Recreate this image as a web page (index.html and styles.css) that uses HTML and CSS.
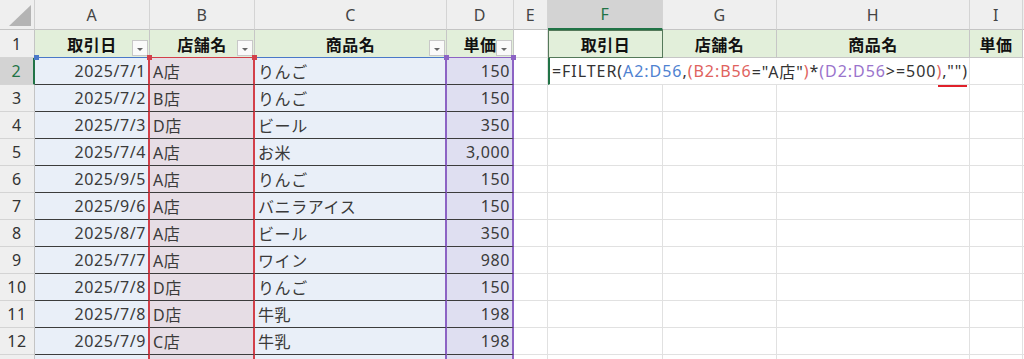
FILE: index.html
```html
<!DOCTYPE html>
<html lang="ja">
<head>
<meta charset="utf-8">
<title>FILTER</title>
<link rel="stylesheet" href="styles.css">
</head>
<body>
<div class="sheet">
  <!-- column headers -->
  <div class="c corner"><svg class="tri" width="22" height="22" viewBox="0 0 22 22"><polygon points="22,0 22,21 0,21" fill="#b4b4b4"/></svg></div>
  <div class="c ch">A</div>
  <div class="c ch">B</div>
  <div class="c ch">C</div>
  <div class="c ch">D</div>
  <div class="c ch">E</div>
  <div class="c ch ch-sel">F</div>
  <div class="c ch">G</div>
  <div class="c ch">H</div>
  <div class="c ch">I</div>
  <div class="c ch"></div>

  <!-- row 1 -->
  <div class="c rh">1</div>
  <div class="c th th-blue">取引日<span class="fbtn"><i></i></span></div>
  <div class="c th th-red">店舗名<span class="fbtn"><i></i></span></div>
  <div class="c th th-blue">商品名<span class="fbtn"><i></i></span></div>
  <div class="c th th-purple">単価<span class="fbtn"><i></i></span></div>
  <div class="c"></div>
  <div class="c th th-out">取引日</div>
  <div class="c th">店舗名</div>
  <div class="c th">商品名</div>
  <div class="c th">単価</div>
  <div class="c"></div>

  <!-- row 2 -->
  <div class="c rh rh-sel">2</div>
  <div class="c da">2025/7/1</div>
  <div class="c db">A店</div>
  <div class="c dc">りんご</div>
  <div class="c dd">150</div>
  <div class="c"></div>
  <div class="c formula"><span>=FILTER(</span><span class="fb">A2:D56</span>,<span class="fr">(B2:B56</span>="A店"<span class="fr">)</span>*<span class="fp">(D2:D56</span>&gt;=500<span class="fr">)</span>,"")<span class="uline"></span></div>
  <div class="c"></div>
  <div class="c"></div>

  <!-- row 3 -->
  <div class="c rh">3</div>
  <div class="c da">2025/7/2</div><div class="c db">B店</div><div class="c dc">りんご</div><div class="c dd">150</div>
  <div class="c"></div><div class="c"></div><div class="c"></div><div class="c"></div><div class="c"></div><div class="c"></div>

  <div class="c rh">4</div>
  <div class="c da">2025/7/3</div><div class="c db">D店</div><div class="c dc">ビール</div><div class="c dd">350</div>
  <div class="c"></div><div class="c"></div><div class="c"></div><div class="c"></div><div class="c"></div><div class="c"></div>

  <div class="c rh">5</div>
  <div class="c da">2025/7/4</div><div class="c db">A店</div><div class="c dc">お米</div><div class="c dd">3,000</div>
  <div class="c"></div><div class="c"></div><div class="c"></div><div class="c"></div><div class="c"></div><div class="c"></div>

  <div class="c rh">6</div>
  <div class="c da">2025/9/5</div><div class="c db">A店</div><div class="c dc">りんご</div><div class="c dd">150</div>
  <div class="c"></div><div class="c"></div><div class="c"></div><div class="c"></div><div class="c"></div><div class="c"></div>

  <div class="c rh">7</div>
  <div class="c da">2025/9/6</div><div class="c db">A店</div><div class="c dc">バニラアイス</div><div class="c dd">150</div>
  <div class="c"></div><div class="c"></div><div class="c"></div><div class="c"></div><div class="c"></div><div class="c"></div>

  <div class="c rh">8</div>
  <div class="c da">2025/8/7</div><div class="c db">A店</div><div class="c dc">ビール</div><div class="c dd">350</div>
  <div class="c"></div><div class="c"></div><div class="c"></div><div class="c"></div><div class="c"></div><div class="c"></div>

  <div class="c rh">9</div>
  <div class="c da">2025/7/7</div><div class="c db">A店</div><div class="c dc">ワイン</div><div class="c dd">980</div>
  <div class="c"></div><div class="c"></div><div class="c"></div><div class="c"></div><div class="c"></div><div class="c"></div>

  <div class="c rh">10</div>
  <div class="c da">2025/7/8</div><div class="c db">D店</div><div class="c dc">りんご</div><div class="c dd">150</div>
  <div class="c"></div><div class="c"></div><div class="c"></div><div class="c"></div><div class="c"></div><div class="c"></div>

  <div class="c rh">11</div>
  <div class="c da">2025/7/8</div><div class="c db">D店</div><div class="c dc">牛乳</div><div class="c dd">198</div>
  <div class="c"></div><div class="c"></div><div class="c"></div><div class="c"></div><div class="c"></div><div class="c"></div>

  <div class="c rh">12</div>
  <div class="c da">2025/7/9</div><div class="c db">C店</div><div class="c dc">牛乳</div><div class="c dd">198</div>
  <div class="c"></div><div class="c"></div><div class="c"></div><div class="c"></div><div class="c"></div><div class="c"></div>

  <div class="c rh"></div>
  <div class="c da"></div><div class="c db"></div><div class="c dc"></div><div class="c dd"></div>
  <div class="c"></div><div class="c"></div><div class="c"></div><div class="c"></div><div class="c"></div><div class="c"></div>

  <!-- range handles -->
  <span class="hd hd-blue hd1"></span>
  <span class="hd hd-red hd2"></span>
  <span class="hd hd-red hd3"></span>
  <span class="hd hd-purple hd4"></span>
  <span class="hd hd-purple hd5"></span>
</div>
</body>
</html>
```

FILE: styles.css
```css
html, body {
  margin: 0;
  padding: 0;
  background: #ffffff;
}

.sheet {
  position: relative;
  width: 1024px;
  height: 359px;
  overflow: hidden;
  display: grid;
  grid-template-columns: 35px 115px 105px 192px 67px 34px 115px 114px 193px 53px 1fr;
  grid-template-rows: 30px 28px repeat(12, 27px);
  font-family: "Noto Sans", "Noto Sans CJK JP", sans-serif;
  font-size: 16px;
  color: #3a3a3a;
}

.c {
  box-sizing: border-box;
  border-right: 1px solid #e1e1e1;
  border-bottom: 1px solid #e1e1e1;
  display: flex;
  align-items: center;
  padding: 0 3px;
  white-space: nowrap;
  overflow: hidden;
  letter-spacing: 0.6px;
}

/* headers */
.corner {
  background: #efefef;
  border-right: 1px solid #d0d0d0;
  border-bottom: 1px solid #c4c4c4;
  align-items: flex-end;
  justify-content: flex-end;
  padding: 0 3px 2px 0;
}
.tri { display: block; }

.ch {
  background: #efefef;
  border-right: 1px solid #d4d4d4;
  border-bottom: 1px solid #c4c4c4;
  justify-content: center;
  color: #444444;
  padding: 0;
}
.ch-sel {
  background: #d3d3d3;
  color: #217346;
  border-bottom: 2px solid #217346;
}

.rh {
  background: #efefef;
  border-right: 1px solid #c4c4c4;
  border-bottom: 1px solid #d4d4d4;
  justify-content: center;
  color: #333333;
  padding: 0;
}
.rh-sel {
  background: #d3d3d3;
  color: #217346;
  border-right: 2px solid #217346;
}

/* table header row */
.th {
  position: relative;
  background: #e2efda;
  border-right: 1px solid #c6c6c6;
  border-bottom: 1px solid #c6c6c6;
  justify-content: center;
  font-weight: bold;
  color: #111111;
  font-family: "Noto Sans CJK JP", sans-serif;
  letter-spacing: 0.5px;
}
.th-blue { border-bottom: 1px solid #4a78c8; }
.th-red { border-bottom: 1px solid #d2404a; }
.th-purple { border-bottom: 1px solid #8c63c4; }
.th-out {
  border: 1px solid #55795a;
}

.fbtn {
  position: absolute;
  right: 1px;
  bottom: 1px;
  width: 16px;
  height: 16px;
  box-sizing: border-box;
  background: #fafafa;
  border: 1px solid #c8c8c8;
  display: flex;
  align-items: center;
  justify-content: center;
}
.fbtn i {
  display: block;
  width: 0;
  height: 0;
  border-left: 3px solid transparent;
  border-right: 3px solid transparent;
  border-top: 3px solid #666666;
  margin-top: 2px;
}

/* data cells */
.da, .db, .dc, .dd {
  border-bottom: 1px solid #3c3c3c;
}
.da {
  background: #e9eff8;
  justify-content: flex-end;
  border-right: 2px solid #d2404a;
  padding-right: 2px;
}
.db {
  background: #e6dde5;
  border-right: 2px solid #d2404a;
  padding-left: 3px;
}
.dc {
  background: #e9eff8;
  border-right: 2px solid #8c63c4;
  padding-left: 3px;
}
.dd {
  background: #dfdff1;
  justify-content: flex-end;
  border-right: 2px solid #8c63c4;
  padding-right: 2px;
}

/* formula */
.formula {
  position: relative;
  grid-column: span 3;
  background: #ffffff;
  border-left: 2px solid #217346;
  padding-left: 2px;
  color: #333333;
  overflow: visible;
  letter-spacing: 0.95px;
}
.fb { color: #4f82d1; }
.fr { color: #e0625e; }
.fp { color: #9a74cc; }
.uline {
  position: absolute;
  left: 388px;
  top: 27px;
  width: 29px;
  height: 2px;
  background: #e0202a;
}

/* range handles */
.hd {
  position: absolute;
  width: 5px;
  height: 5px;
  top: 55px;
}
.hd-blue { background: #4a78c8; }
.hd-red { background: #d2404a; }
.hd-purple { background: #8c63c4; }
.hd1 { left: 34px; }
.hd2 { left: 147px; }
.hd3 { left: 252px; }
.hd4 { left: 444px; }
.hd5 { left: 511px; }
```
